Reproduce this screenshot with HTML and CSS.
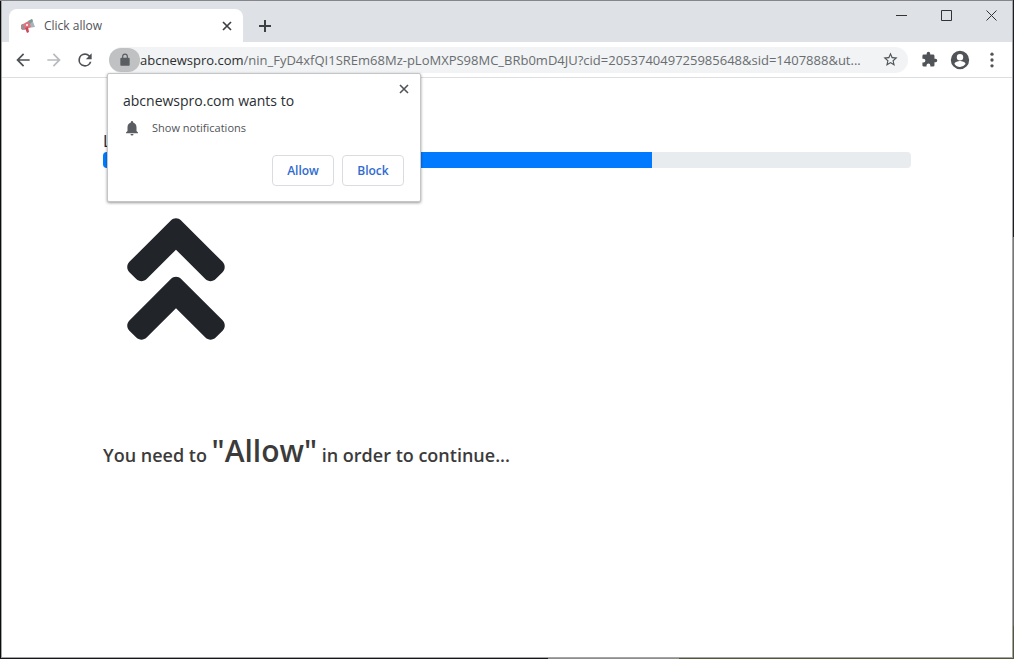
FILE: index.html
```html
<!DOCTYPE html>
<html lang="en">

<head>
  <meta charset="UTF-8">
  <meta name="viewport" content="width=device-width, initial-scale=1.0">
  <title>Click allow</title>
  <link rel="stylesheet" href="styles.css">
</head>

<body>
  <div class="window">
    <header class="tab-strip">
      <div class="tab">
        <svg class="favicon" viewBox="0 0 16 16">
          <path d="M5 5l7-4 3 8-7 1z" fill="#a9b4b8" />
          <path d="M1 7l8-4 2 6-7 3-3-1z" fill="#df7480" />
          <path d="M5 10l3-1 1 5-2 1z" fill="#cf4655" />
          <path d="M8 3l4-2 1 2-3 3z" fill="#7d9994" />
          <path d="M1 7l2-1 2 5-3 1z" fill="#8e9699" />
          <path d="M6 6l2 0 0 2-2 0z" fill="#f5dfe1" />
        </svg>
        <span class="tab-title">Click allow</span>
        <button class="icon-button tab-close" aria-label="Close tab">
          <svg width="10" height="10" viewBox="0 0 10 10"><path d="M1 1l8 8M9 1l-8 8" stroke="#3c4043" stroke-width="1.7" /></svg>
        </button>
      </div>
      <button class="icon-button new-tab" aria-label="New tab">
        <svg width="12" height="12" viewBox="0 0 12 12"><path d="M6 0v12M0 6h12" stroke="#3c4043" stroke-width="2" /></svg>
      </button>
      <div class="window-controls">
        <button class="icon-button" aria-label="Minimize">
          <svg width="11" height="11" viewBox="0 0 11 11"><path d="M0 5.5h11" stroke="#333" /></svg>
        </button>
        <button class="icon-button" aria-label="Maximize">
          <svg width="11" height="11" viewBox="0 0 11 11"><path d="M.5.5h10v10H.5z" fill="none" stroke="#333" /></svg>
        </button>
        <button class="icon-button" aria-label="Close">
          <svg width="11" height="11" viewBox="0 0 11 11"><path d="M.5.5l10 10M10.500 .5l-10 10" stroke="#333" /></svg>
        </button>
      </div>
    </header>

    <div class="toolbar">
      <div class="nav-buttons">
        <button class="icon-button" aria-label="Back">
          <svg width="20" height="20" viewBox="0 0 24 24" fill="#4e5256"><path d="M20 11H7.830l5.590-5.590L12 4l-8 8 8 8 1.410-1.410L7.830 13H20z" /></svg>
        </button>
        <button class="icon-button" aria-label="Forward">
          <svg width="20" height="20" viewBox="0 0 24 24" fill="#b8babd"><path d="M4 13h12.170l-5.590 5.590L12 20l8-8-8-8-1.410 1.410L16.170 11H4z" /></svg>
        </button>
        <button class="icon-button" aria-label="Reload">
          <svg width="20" height="20" viewBox="0 0 24 24" fill="#4e5256"><path d="M17.650 6.350A7.960 7.960 0 0 0 12 4a8 8 0 1 0 7.730 10h-2.080A6 6 0 1 1 12 6c1.660 0 3.140.69 4.220 1.780L13 11h7V4z" /></svg>
        </button>
      </div>

      <div class="address-bar">
        <button class="site-info" aria-label="View site information">
          <svg width="14" height="14" viewBox="0 0 24 24" fill="#5a5d61"><path d="M18 8h-1V6A5 5 0 0 0 7 6v2H6a2 2 0 0 0-2 2v10a2 2 0 0 0 2 2h12a2 2 0 0 0 2-2V10a2 2 0 0 0-2-2zM9 8V6a3 3 0 0 1 6 0v2z" /></svg>
        </button>
        <label class="domain" for="url">abcnewspro.com</label>
        <input class="url" id="url" type="text" value="/nin_FyD4xfQI1SREm68Mz-pLoMXPS98MC_BRb0mD4JU?cid=205374049725985648&amp;sid=1407888&amp;ut...">
        <button class="icon-button bookmark" aria-label="Bookmark this tab">
          <svg width="17" height="17" viewBox="0 0 24 24" fill="#505458"><path d="M22 9.240l-7.190-.62L12 2 9.190 8.630 2 9.240l5.460 4.730L5.820 21 12 17.270 18.180 21l-1.630-7.030zM12 15.400l-3.760 2.270 1-4.280-3.320-2.880 4.380-.38L12 6.100l1.710 4.040 4.380.38-3.320 2.880 1 4.280z" /></svg>
        </button>

        <!-- permission prompt, hangs below the address bar -->
        <div class="prompt" role="dialog" aria-labelledby="prompt-title">
          <button class="icon-button prompt-close" aria-label="Close">
            <svg width="10" height="10" viewBox="0 0 10 10"><path d="M1 1l8 8M9 1l-8 8" stroke="#505458" stroke-width="1.6" /></svg>
          </button>
          <div class="prompt-title" id="prompt-title">abcnewspro.com wants to</div>
          <div class="prompt-permission">
            <svg width="18" height="18" viewBox="0 0 24 24" fill="#5a5d61"><path d="M12 22a2 2 0 0 0 2-2h-4a2 2 0 0 0 2 2zm6-6v-5c0-3.070-1.640-5.640-4.500-6.320V4a1.500 1.500 0 0 0-3 0v.68C7.630 5.360 6 7.920 6 11v5l-2 2v1h16v-1z" /></svg>
            <span>Show notifications</span>
          </div>
          <div class="prompt-actions">
            <button class="prompt-button">Allow</button>
            <button class="prompt-button">Block</button>
          </div>
        </div>
      </div>

      <div class="toolbar-actions">
        <button class="icon-button" aria-label="Extensions">
          <svg width="17" height="17" viewBox="0 0 24 24" fill="#505458"><path d="M20.500 11H19V7a2 2 0 0 0-2-2h-4V3.500a2.500 2.500 0 0 0-5 0V5H4a2 2 0 0 0-2 2v3.800h1.500a2.700 2.700 0 0 1 0 5.400H2V20a2 2 0 0 0 2 2h3.800v-1.500a2.700 2.700 0 0 1 5.400 0V22H17a2 2 0 0 0 2-2v-4h1.500a2.500 2.500 0 0 0 0-5z" /></svg>
        </button>
        <button class="icon-button" aria-label="Profile">
          <svg width="22" height="22" viewBox="0 0 24 24" fill="#505458"><path d="M12 2a10 10 0 1 0 0 20 10 10 0 0 0 0-20zm0 3.500a3.500 3.500 0 1 1 0 7 3.500 3.500 0 0 1 0-7zm0 14a7.200 7.200 0 0 1-6-3.220c.03-1.990 4-3.080 6-3.080s5.970 1.090 6 3.080A7.200 7.200 0 0 1 12 19.500z" /></svg>
        </button>
        <button class="icon-button" aria-label="Menu">
          <svg width="20" height="20" viewBox="0 0 24 24" fill="#505458"><circle cx="12" cy="5" r="2" /><circle cx="12" cy="12" r="2" /><circle cx="12" cy="19" r="2" /></svg>
        </button>
      </div>
    </div>

    <main class="page">
      <div class="loading-text" id="loading">Loading...</div>
      <div class="progress" role="progressbar" aria-labelledby="loading" aria-valuenow="68" aria-valuemin="0" aria-valuemax="100">
        <div class="progress-bar" style="width: 68%"></div>
      </div>
      <svg class="arrows" viewBox="0 0 320 512">
        <path d="M177 255.700l136 136c9.400 9.400 9.400 24.600 0 33.900l-22.600 22.600c-9.400 9.400-24.600 9.400-33.900 0L160 351.900l-96.400 96.400c-9.400 9.400-24.600 9.400-33.900 0L7 425.700c-9.400-9.400-9.400-24.600 0-33.900l136-136c9.400-9.500 24.600-9.500 34-.1zm-34-192L7 199.700c-9.400 9.400-9.400 24.600 0 33.900l22.600 22.600c9.400 9.400 24.600 9.400 33.900 0l96.400-96.400 96.400 96.400c9.400 9.400 24.600 9.400 33.900 0l22.600-22.600c9.400-9.400 9.400-24.600 0-33.900l-136-136c-9.200-9.400-24.400-9.400-33.800 0z" />
      </svg>
      <h1 class="message">You need to <span class="message-allow">"Allow"</span> in order to continue...</h1>
    </main>
  </div>
</body>

</html>
```

FILE: styles.css
```css
* {
  box-sizing: border-box;
}

body {
  margin: 0;
  min-height: 100vh;
  padding: 1px;
  display: flex;
  font-family: "Open Sans", "Noto Sans", sans-serif;
  color: #212529;
  /* desktop showing around the window */
  background:
    linear-gradient(to right, #161618 54%, #8d8d8d 54%, #8d8d8d 67%, #53563a 67%) bottom / 100% 1px no-repeat,
    linear-gradient(#1c1d22 36%, #77787a 36%, #666 95%, #53563a 95%) right / 1px 100% no-repeat,
    linear-gradient(#84868c, #84868c) top / 100% 1px no-repeat,
    #0c0c0c;
}

button,
input {
  font-family: inherit;
}

.window {
  flex: 1;
  min-width: 0;
  display: flex;
  flex-direction: column;
  background-color: #fff;
  border: 1px solid #a3a4a6;
  border-top: none;
}

.icon-button {
  display: flex;
  align-items: center;
  justify-content: center;
  flex: none;
  padding: 0;
  border: none;
  background: none;
  cursor: pointer;
}

/* Tabs */
.tab-strip {
  display: flex;
  align-items: flex-end;
  height: 41px;
  padding-left: 7px;
  background-color: #dee1e6;
}

.tab {
  display: flex;
  align-items: center;
  width: 234px;
  height: 33px;
  padding: 0 10px 0 11px;
  background-color: #fff;
  border-radius: 8px 8px 0 0;
}

.favicon {
  width: 16px;
  height: 16px;
}

.tab-title {
  flex: 1;
  margin-left: 8px;
  font-size: 12px;
  color: #505357;
}

.tab-close {
  width: 12px;
  height: 16px;
}

.new-tab {
  width: 28px;
  height: 28px;
  margin: 0 0 2px 8px;
}

.window-controls {
  display: flex;
  gap: 4px;
  align-self: flex-start;
  margin-left: auto;
}

.window-controls .icon-button {
  width: 41px;
  height: 29px;
}

/* Toolbar */
.toolbar {
  display: flex;
  align-items: center;
  height: 36px;
  padding: 0 10px 0 11px;
  border-bottom: 1px solid #dcdee0;
}

.nav-buttons {
  display: flex;
  gap: 11px;
  margin-right: 14px;
}

.address-bar {
  position: relative;
  display: flex;
  align-items: center;
  flex: 1;
  min-width: 0;
  height: 26px;
  padding-right: 9px;
  background-color: #f1f3f4;
  border-radius: 13px;
  font-size: 13px;
}

.site-info {
  display: flex;
  align-items: center;
  justify-content: center;
  flex: none;
  width: 31px;
  height: 24px;
  padding: 0;
  background-color: #bfc1c3;
  border: none;
  border-radius: 12px;
}

.domain {
  color: #2b2e31;
}

.url {
  flex: 1;
  min-width: 0;
  padding: 0;
  border: none;
  outline: none;
  background: none;
  font-size: 13px;
  color: #696d71;
}

.toolbar-actions {
  display: flex;
  align-items: center;
  gap: 11px;
  margin-left: 13px;
}

/* Permission prompt */
.prompt {
  position: absolute;
  top: 100%;
  left: -2px;
  width: 314px;
  padding: 17px 16px 15px 15px;
  background-color: #fff;
  border: 1px solid #c4c5c6;
  border-radius: 2px;
  box-shadow: 0 1px 3px rgba(0, 0, 0, 0.4);
  z-index: 1;
}

.prompt-close {
  position: absolute;
  top: 6px;
  right: 7px;
  width: 18px;
  height: 18px;
}

.prompt-title {
  font-size: 14px;
  line-height: 20px;
  color: #2b2e31;
}

.prompt-permission {
  display: flex;
  align-items: center;
  gap: 11px;
  margin-top: 8px;
  font-size: 11px;
  line-height: 18px;
  color: #505357;
}

.prompt-actions {
  display: flex;
  justify-content: flex-end;
  gap: 8px;
  margin-top: 18px;
}

.prompt-button {
  width: 62px;
  height: 31px;
  padding: 0;
  background-color: #fff;
  border: 1px solid #dadce0;
  border-radius: 4px;
  font-size: 12px;
  font-weight: 600;
  color: #2f6bd0;
  cursor: pointer;
}

/* Page */
.page {
  flex: 1;
  padding: 52px 10% 0;
}

.loading-text {
  font-size: 16px;
  line-height: 22px;
}

.progress {
  height: 16px;
  overflow: hidden;
  background-color: #e9ecef;
  border-radius: 4px;
}

.progress-bar {
  height: 100%;
  background-color: #007bff;
}

.arrows {
  display: block;
  width: 98px;
  height: 156px;
  margin: 33px 0 0 24px;
  fill: #212529;
}

.message {
  margin: 70px 0 0;
  font-size: 18px;
  line-height: 48px;
  font-weight: 600;
  color: #3b3b3b;
}

.message-allow {
  font-size: 30px;
}
```
